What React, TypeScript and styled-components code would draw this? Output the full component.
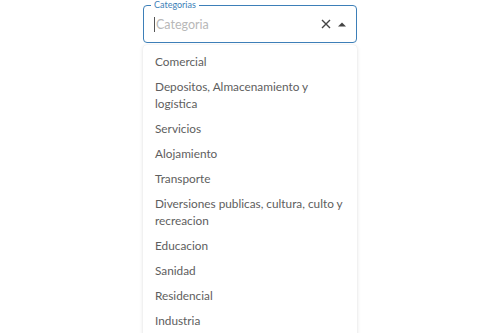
import React from 'react'
import styled, { createGlobalStyle } from 'styled-components'

const GlobalStyle = createGlobalStyle`
  html, body {
    margin: 0;
    padding: 0;
    background: #fff;
    font-family: Lato, "Noto Sans", sans-serif;
  }
`

const Page = styled.div`
  display: flex;
  justify-content: center;
  align-items: flex-start;
  padding-top: 5px;
  height: 333px;
  overflow: hidden;
  box-sizing: border-box;
`

const Field = styled.div`
  width: 214px;
  display: flex;
  flex-direction: column;
`

const InputBox = styled.div`
  flex-shrink: 0;
  height: 38px;
  box-sizing: border-box;
  border: 1px solid #3d7fb8;
  border-radius: 4px;
  padding: 0 10px 0 10px;
  display: flex;
  align-items: center;
  position: relative;
`

const Label = styled.span`
  position: absolute;
  top: -7px;
  left: 7px;
  padding: 0 3px;
  background: #fff;
  font-size: 9px;
  line-height: 12px;
  color: #3d7fb8;
`

const Placeholder = styled.div`
  flex: 1;
  font-size: 12.5px;
  color: #b8b8b8;
  display: flex;
  align-items: center;
`

const Caret = styled.span`
  display: inline-block;
  width: 1px;
  height: 15px;
  background: #555;
  margin-right: 1px;
`

const Icons = styled.div`
  display: flex;
  align-items: center;
  gap: 7px;
`

const Menu = styled.ul`
  list-style: none;
  margin: 2px 0 0 0;
  padding: 4px 0;
  background: #fff;
  border-radius: 4px;
  box-shadow: 0 1px 4px rgba(0, 0, 0, 0.12), 0 0 1px rgba(0, 0, 0, 0.1);
`

const Item = styled.li`
  padding: 4px 11px 4px 12px;
  font-size: 11.8px;
  line-height: 17px;
  color: #5e5e5e;
`

const options = [
  'Comercial',
  'Depositos, Almacenamiento y logística',
  'Servicios',
  'Alojamiento',
  'Transporte',
  'Diversiones publicas, cultura, culto y recreacion',
  'Educacion',
  'Sanidad',
  'Residencial',
  'Industria',
]

const App = () => (
  <>
    <GlobalStyle />
    <Page>
      <Field>
        <InputBox>
          <Label>Categorias</Label>
          <Placeholder>
            <Caret />
            Categoria
          </Placeholder>
          <Icons>
            <svg width="10" height="10" viewBox="0 0 10 10">
              <path d="M1 1 L9 9 M9 1 L1 9" stroke="#444" strokeWidth="1.4" />
            </svg>
            <svg width="8" height="5" viewBox="0 0 8 5">
              <path d="M0 4.5 L4 0.5 L8 4.5 Z" fill="#444" />
            </svg>
          </Icons>
        </InputBox>
        <Menu>
          {options.map((o) => (
            <Item key={o}>{o}</Item>
          ))}
        </Menu>
      </Field>
    </Page>
  </>
)

export default App
